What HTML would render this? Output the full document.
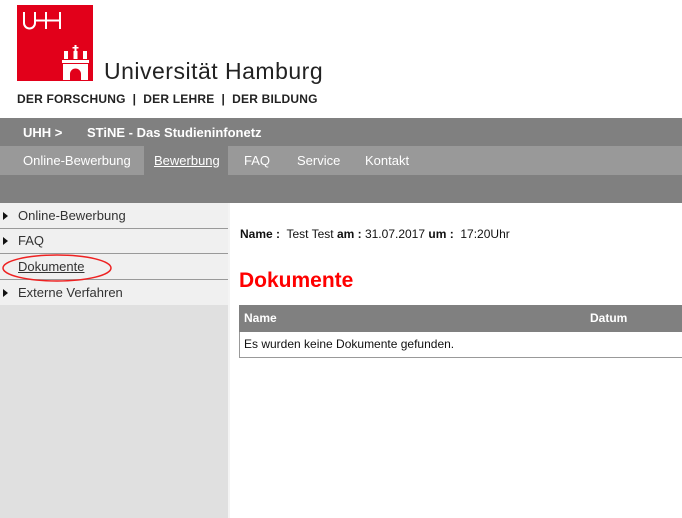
<!DOCTYPE html>
<html><head><meta charset="utf-8"><style>
*{margin:0;padding:0;box-sizing:border-box}
body{width:682px;height:518px;overflow:hidden;background:#fff;font-family:"Liberation Sans",Arial,sans-serif;position:relative}
.abs{position:absolute}
.tri{position:absolute;left:3px;width:0;height:0;border-top:4px solid transparent;border-bottom:4px solid transparent;border-left:5px solid #111}
</style></head><body>
<div class="abs" style="left:17px;top:5px;width:76px;height:76px;background:#e2001a"></div>
<svg class="abs" style="left:17px;top:5px" width="76" height="76" viewBox="0 0 76 76">
<g fill="none" stroke="#fff" stroke-width="2"><path d="M7 7v11a5.5 5.5 0 0 0 11 0V7"/><path d="M18 15.5h25M29 7v17M43 7v17"/></g>
<g fill="#fff"><rect x="57.5" y="40" width="2" height="6"/><rect x="55.5" y="42" width="6" height="1.5"/>
<rect x="47" y="46" width="4" height="8"/><rect x="56.5" y="46" width="4" height="8"/><rect x="66" y="46" width="4" height="8"/>
<rect x="45" y="55" width="27" height="3"/><path d="M46 59h25v16h-7v-6a5.5 5.5 0 0 0-11 0v6h-7z"/></g></svg>
<div class="abs" style="left:104px;top:58px;font-size:23px;color:#222;letter-spacing:0.5px">Universität Hamburg</div>
<div class="abs" style="left:17px;top:92px;font-size:12px;font-weight:bold;color:#222;letter-spacing:0.2px">DER FORSCHUNG &nbsp;|&nbsp; DER LEHRE &nbsp;|&nbsp; DER BILDUNG</div>
<div class="abs" style="left:0;top:118px;width:682px;height:28px;background:#808080"></div>
<div class="abs" style="left:23px;top:125px;color:#fff;font-size:13px;font-weight:bold">UHH &gt;</div>
<div class="abs" style="left:87px;top:125px;color:#fff;font-size:13px;font-weight:bold">STiNE - Das Studieninfonetz</div>
<div class="abs" style="left:0;top:146px;width:682px;height:29px;background:#999"></div>
<div class="abs" style="left:144px;top:146px;width:84px;height:29px;background:#808080"></div>
<div class="abs" style="left:23px;top:153px;color:#fff;font-size:13px">Online-Bewerbung</div>
<div class="abs" style="left:154px;top:153px;color:#fff;font-size:13px;text-decoration:underline">Bewerbung</div>
<div class="abs" style="left:244px;top:153px;color:#fff;font-size:13px">FAQ</div>
<div class="abs" style="left:297px;top:153px;color:#fff;font-size:13px">Service</div>
<div class="abs" style="left:365px;top:153px;color:#fff;font-size:13px">Kontakt</div>
<div class="abs" style="left:0;top:175px;width:682px;height:28px;background:#808080"></div>
<div class="abs" style="left:0;top:203px;width:228px;height:315px;background:#e0e0e0"></div>
<div class="abs" style="left:0;top:203px;width:228px;height:102px;background:#f0f0f0"></div>
<div class="abs" style="left:0;top:228px;width:228px;height:1px;background:#999"></div>
<div class="abs" style="left:0;top:253px;width:228px;height:1px;background:#999"></div>
<div class="abs" style="left:0;top:279px;width:228px;height:1px;background:#999"></div>
<div class="abs" style="left:228px;top:203px;width:2px;height:315px;background:#f4f4f4"></div>
<div class="tri" style="top:212px"></div>
<div class="abs" style="left:18px;top:208px;font-size:13px;color:#333">Online-Bewerbung</div>
<div class="tri" style="top:237px"></div>
<div class="abs" style="left:18px;top:233px;font-size:13px;color:#333">FAQ</div>
<div class="abs" style="left:18px;top:259px;font-size:13px;color:#333;text-decoration:underline">Dokumente</div>
<div class="tri" style="top:289px"></div>
<div class="abs" style="left:18px;top:285px;font-size:13px;color:#333">Externe Verfahren</div>
<svg class="abs" style="left:0;top:253px" width="115" height="32"><ellipse cx="57" cy="15" rx="54" ry="13" fill="none" stroke="#e22" stroke-width="1.5"/></svg>
<div class="abs" style="left:240px;top:227px;font-size:12px;color:#111"><b>Name :</b>&nbsp; Test Test <b>am :</b> 31.07.2017 <b>um :</b>&nbsp; 17:20Uhr</div>
<div class="abs" style="left:239px;top:269px;font-size:21px;font-weight:bold;color:#f00">Dokumente</div>
<div class="abs" style="left:239px;top:305px;width:443px;height:27px;background:#808080"></div>
<div class="abs" style="left:244px;top:311px;font-size:12px;font-weight:bold;color:#fff">Name</div>
<div class="abs" style="left:590px;top:311px;font-size:12px;font-weight:bold;color:#fff">Datum</div>
<div class="abs" style="left:239px;top:332px;width:445px;height:26px;border:1px solid #999;border-top:none"></div>
<div class="abs" style="left:244px;top:337px;font-size:12px;color:#111">Es wurden keine Dokumente gefunden.</div>
</body></html>
